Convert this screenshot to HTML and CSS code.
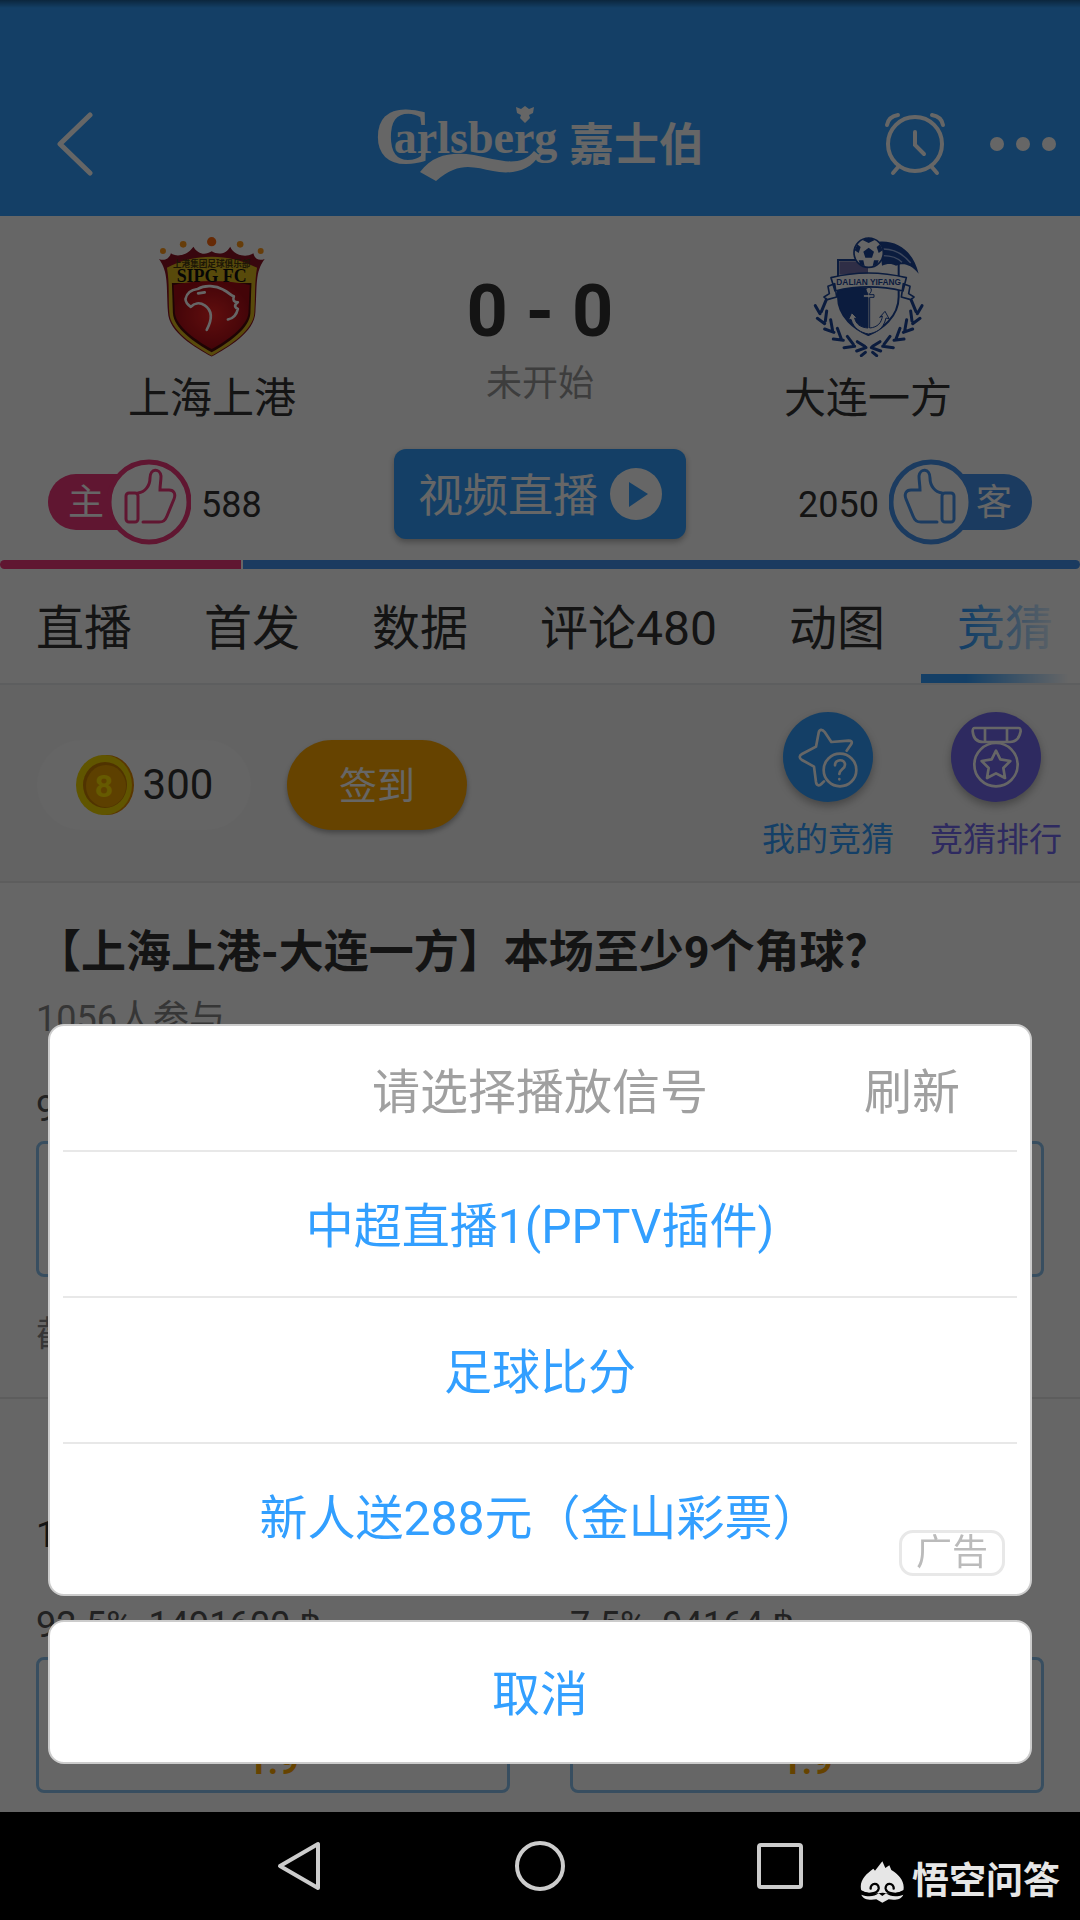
FILE: index.html
```html
<!DOCTYPE html>
<html lang="zh-CN">
<head>
    <meta charset="UTF-8">
    <meta name="viewport" content="width=device-width, initial-scale=1.0">
    <title>上海上港 - 大连一方</title>
    <link rel="stylesheet" href="styles.css">
</head>
<body>
    <div class="page">
        <header class="topbar">
            <button class="icon-btn back" aria-label="返回">
                <svg width="36" height="64" viewBox="0 0 36 64" fill="none" stroke="#fff" stroke-width="5" stroke-linecap="round" stroke-linejoin="round"><path d="M33 3 3 32l30 29"/></svg>
            </button>
            <!-- sponsor logo -->
            <svg class="sponsor" width="328" height="76" viewBox="0 0 328 76" fill="#fff" role="img" aria-label="Carlsberg 嘉士伯">
                <text class="brand" x="-2" y="57" font-size="80">C<tspan dx="-38" dy="-10" font-size="46">arlsberg</tspan></text>
                <path d="M44 66C58 48 76 46 98 49c22 4 46 14 60-4l5 4c-8 16-28 20-46 16-20-4-34-10-57 10z"/>
                <path d="M140 1l5 2 4-3 4 3 5-2-1 6-4 2 1 3-5 5-5-5 1-3-4-2z"/>
                <text class="brand-cn" x="193" y="55" font-size="45">嘉士伯</text>
            </svg>
            <div class="topbar-actions">
                <button class="icon-btn" aria-label="提醒">
                    <svg width="62" height="64" viewBox="0 0 62 64" fill="none" stroke="#fff" stroke-width="4" stroke-linecap="round"><circle cx="31" cy="32" r="27"/><path d="M31 20v13l9 9M3 13C4 7 8 4 14 3M48 3c6 1 10 4 11 10M15 54l-6 7M47 54l6 7"/></svg>
                </button>
                <button class="icon-btn" aria-label="更多">
                    <svg width="68" height="16" viewBox="0 0 68 16" fill="#fff"><circle cx="8" cy="8" r="7"/><circle cx="34" cy="8" r="7"/><circle cx="60" cy="8" r="7"/></svg>
                </button>
            </div>
        </header>

        <main>
            <section class="match">
                <div class="team">
                    <svg width="106" height="121" viewBox="118 45 320 363">
                        <defs><radialGradient id="red"><stop offset="0" stop-color="#f02424"/><stop offset="1" stop-color="#a80c16"/></radialGradient></defs>
                        <path fill="#8c1224" d="M118 113c14 6 30 2 36-17 16 12 48 8 68-20 14 24 36 26 55 14 20 12 44 8 56-14 12 28 50 34 70 20 4 18 18 24 34 17-30 40-22 80-28 160-2 62-84 108-132 135-48-27-130-73-132-135-5-80 2-120-27-160z"/>
                        <path fill="#dcb81c" d="M142 140c80-45 190-45 272 0-8 45-5 90-8 135-2 52-72 100-129 130-57-30-126-78-128-130-3-45 1-90-7-135z"/>
                        <path fill="#4c0a0a" d="M157 186h240l-3 90c-2 46-66 90-117 119-51-29-115-73-117-119z"/>
                        <path fill="url(#red)" d="M162 192c70-16 160-16 230 0l-4 84c-4 42-66 84-111 109-45-25-107-67-111-109z"/>
                        <text class="crest-cn" x="277" y="138" font-size="26">上港集团足球俱乐部</text>
                        <text class="crest-en" x="277" y="182" font-size="54">SIPG FC</text>
                        <path fill="none" stroke="#fff" stroke-width="8" stroke-linecap="round" stroke-linejoin="round" d="M262 327c16-30 18-58-6-74-16-10-32-6-42 5-8-6-16-14-16-24 4-18 18-28 36-30 24-14 56-10 78 2 18 8 22 18 32 20-4 12 0 18 12 18-10 8-12 14 0 20-4 18-12 28-30 32M236 217l20-3"/>
                        <g fill="#ff9a1a"><circle cx="130" cy="89" r="9"/><circle cx="191" cy="69" r="10"/><circle cx="277" cy="61" r="14" fill="#ff6a10"/><circle cx="363" cy="69" r="10"/><circle cx="425" cy="89" r="9"/></g>
                    </svg>
                    <span class="team-name">上海上港</span>
                </div>
                <div class="result">
                    <strong class="score">0 - 0</strong>
                    <span class="status">未开始</span>
                </div>
                <div class="team">
                    <svg width="112" height="121" viewBox="100 45 336 363">
                        <path fill="#fff" stroke="#1c469c" stroke-width="6" d="M178 117h182v110c0 62-52 98-91 115-39-17-91-53-91-115z"/>
                        <path fill="#1c469c" d="M180 200h88v140c-48-20-84-54-88-100z"/>
                        <path fill="#7573ae" d="M182 121h86v40h-86z"/>
                        <path fill="#fff" stroke="#1c469c" stroke-width="3" d="M262 205c4-8 16-8 16 2 0 8-6 10-6 14h14v8h-13v92c24-2 36-16 38-36l-8 4 16-18 12 22-9-2c-8 36-32 44-53 48-22-4-44-16-52-44l-8 2 10-22 18 18-9-2c4 18 16 28 40 30v-92h-14v-8h14c0-6-6-8-6-16z"/>
                        <path fill="#fff" stroke="#1c469c" stroke-width="5" stroke-linejoin="round" d="M148 196l20-8 6 40-28 8-10-8 16-10zM394 196l-20-8-6 40 28 8 10-8-16-10zM157 170c72-18 152-18 226 0l-10 40c-66-16-140-16-204 0z"/>
                        <text class="crest-dl" x="270" y="192" font-size="25">DALIAN YIFANG</text>
                        <path fill="#1c469c" d="M302 62c56-4 102 30 118 96-26-32-50-32-68-24-14-8-28-6-42 0z"/>
                        <path fill="none" stroke="#9cb4e8" stroke-width="4" d="M314 84c34 0 62 18 82 42M314 104c26 0 44 8 56 20"/>
                        <circle cx="270" cy="95" r="44" fill="#fff" stroke="#1c469c" stroke-width="5"/>
                        <path fill="#1c469c" d="M270 80l16 12-6 18h-20l-6-18zM250 56l20-6 20 6-20 10zM228 88l8-18 10 8-6 18zM312 88l-8-18-10 8 6 18zM240 118l14 0 4 18-14-6zM300 118l-14 0-4 18 14-6z"/>
                        <g fill="none" stroke="#1c469c" stroke-width="9" stroke-linecap="round">
                            <path d="M110 254l14 24M142 238l-14 34M116 292l22 16M144 270l-4 30M138 324l28 10M156 296l6 34M164 354l30 4M176 322l12 32M196 380l32-4M206 346l18 24M234 390l28-10M236 362l22 14M248 404l12-10"/>
                            <path d="M430 254l-14 24M398 238l14 34M424 292l-22 16M396 270l4 30M402 324l-28 10M384 296l-6 34M376 354l-30 4M364 322l-12 32M344 380l-32-4M334 346l-18 24M306 390l-28-10M304 362l-22 14M294 404l-12-10"/>
                        </g>
                    </svg>
                    <span class="team-name">大连一方</span>
                </div>

                <button class="vote home">
                    <span class="side">主</span>
                    <svg width="84" height="86" viewBox="-42 -43 84 86" fill="none" stroke="currentColor" stroke-width="3" stroke-linecap="round"><circle r="40" fill="#fff" stroke-width="5"/><rect x="-23" y="-9" width="12" height="29" rx="3"/><path d="M-11-9C-4-10 1-16 1-24c0-10 10-10 11-2 0 5-1 9-1 14h9c5 0 7 4 5 9l-7 17c-2 5-4 6-8 6H-6"/></svg>
                    <span class="votes">588</span>
                </button>
                <button class="watch">
                    <span>视频直播</span>
                    <svg width="52" height="52" viewBox="0 0 52 52"><circle cx="26" cy="26" r="26" fill="#fff"/><path fill="#329fff" d="M19 14v25l19-13z"/></svg>
                </button>
                <button class="vote away">
                    <span class="votes">2050</span>
                    <svg width="84" height="86" viewBox="-42 -43 84 86" fill="none" stroke="currentColor" stroke-width="3" stroke-linecap="round"><g transform="scale(-1 1)"><circle r="40" fill="#fff" stroke-width="5"/><rect x="-23" y="-9" width="12" height="29" rx="3"/><path d="M-11-9C-4-10 1-16 1-24c0-10 10-10 11-2 0 5-1 9-1 14h9c5 0 7 4 5 9l-7 17c-2 5-4 6-8 6H-6"/></g></svg>
                    <span class="side">客</span>
                </button>
            </section>

            <div class="support">
                <div class="support-home" style="width: 22.3%"></div>
                <div class="support-away"></div>
            </div>

            <nav class="tabs">
                <a href="#live">直播</a>
                <a href="#lineup">首发</a>
                <a href="#data">数据</a>
                <a href="#comments">评论480</a>
                <a href="#gif">动图</a>
                <a href="#guess" class="active">竞猜</a>
            </nav>

            <section class="wallet">
                <div class="coins">
                    <svg width="60" height="62" viewBox="0 0 60 62"><ellipse cx="32" cy="31" rx="27" ry="30" fill="#e08a00"/><ellipse cx="29" cy="31" rx="28" ry="30" fill="#f0d400"/><ellipse cx="30" cy="31" rx="22" ry="23" fill="#c88000"/><ellipse cx="31" cy="32" rx="20" ry="21" fill="#e8a000"/><text class="coin-text" x="29" y="43" font-size="32">8</text></svg>
                    <span>300</span>
                </div>
                <button class="sign-in">签到</button>
                <a class="shortcut mine" href="#mine">
                    <svg width="90" height="90" viewBox="249 68 270 270" fill="none" stroke="#fff" stroke-width="8" stroke-linejoin="round" stroke-linecap="round"><path d="M440 184l14-20c4-8-2-10-8-10l-52 4-20-30c-8-10-16-8-18 2l-8 42-42 22c-8 4-10 12 0 18l36 20 6 46c2 12 10 12 16 6l8-8"/><circle cx="420" cy="242" r="49"/><path d="M405 228c0-20 30-20 30-2 0 14-17 14-17 28M418 269v1"/></svg>
                    <span>我的竞猜</span>
                </a>
                <a class="shortcut rank" href="#rank">
                    <svg width="90" height="90" viewBox="753 68 270 270" fill="none" stroke="#fff" stroke-width="8" stroke-linejoin="round"><path d="M824 116h132c6 0 6 4 6 10-4 22-14 32-32 32h-80c-18 0-30-10-32-32 0-6 0-10 6-10zM855 117v40M921 117v40"/><circle cx="888" cy="226" r="65"/><path d="M888 184l13 26 30 5-21 21 5 30-27-14-27 14 5-30-21-21 30-5z"/></svg>
                    <span>竞猜排行</span>
                </a>
            </section>

            <section class="question">
                <h2>【上海上港-大连一方】本场至少9个角球？</h2>
                <p class="joined">1056人参与</p>
                <div class="options">
                    <div class="option">
                        <p class="share"><span>90.8%</span></p>
                        <button><span>是</span><span class="odds">1.9</span></button>
                    </div>
                    <div class="option">
                        <p class="share"><span></span></p>
                        <button><span>否</span><span class="odds">1.9</span></button>
                    </div>
                </div>
                <p class="deadline">截止</p>
            </section>

            <section class="question">
                <h2>【上海上港-大连一方】</h2>
                <p class="joined dark">1人参与</p>
                <div class="options">
                    <div class="option">
                        <p class="share"><span>92.5%</span><span>1491600 ฿</span></p>
                        <button><span>是</span><span class="odds">1.9</span></button>
                    </div>
                    <div class="option">
                        <p class="share"><span>7.5%</span><span>94164 ฿</span></p>
                        <button><span>否</span><span class="odds">1.9</span></button>
                    </div>
                </div>
            </section>
        </main>
    </div>

    <div class="overlay">
        <div class="sheet" role="dialog" aria-labelledby="sheetTitle">
            <div class="sheet-head">
                <h3 id="sheetTitle">请选择播放信号</h3>
                <button class="refresh">刷新</button>
            </div>
            <button class="source">中超直播1(PPTV插件)</button>
            <button class="source">足球比分</button>
            <button class="source">新人送288元（金山彩票）<span class="ad">广告</span></button>
        </div>
        <button class="cancel">取消</button>
    </div>

    <div class="navbar">
        <button class="icon-btn" aria-label="返回"><svg width="48" height="52" viewBox="0 0 48 52" fill="none" stroke="#ccc" stroke-width="4" stroke-linejoin="round"><path d="M42 4v44L4 26z"/></svg></button>
        <button class="icon-btn" aria-label="主页"><svg width="52" height="52" viewBox="0 0 52 52" fill="none" stroke="#ccc" stroke-width="4"><circle cx="26" cy="26" r="23"/></svg></button>
        <button class="icon-btn" aria-label="最近任务"><svg width="48" height="52" viewBox="0 0 48 52" fill="none" stroke="#ccc" stroke-width="4"><rect x="3" y="5" width="42" height="42" rx="2"/></svg></button>
        <div class="watermark">
            <svg width="44" height="42" viewBox="178 232 132 124"><path fill="#e6e6e6" d="M182 320c-8-30 14-50 36-66l5 6 22-28 9 20 12-8 6 14c22 14 42 34 36 62-20 10-44 8-62 6-20 2-44 4-64-6z"/><path fill="none" stroke="#000" stroke-width="7" stroke-linecap="round" d="M180 322c22 14 52 6 54-8 2-20-26-18-24 0M309 322c-22 14-52 6-54-8-2-20 26-18 24 0"/><path fill="#e6e6e6" d="M182 332c20 8 40 6 52-4l11 8 11-8c12 10 32 12 52 4-6 14-24 18-44 14l-19 10-18-10c-20 4-40 0-45-14z"/></svg>
            <span>悟空问答</span>
        </div>
    </div>
</body>
</html>
```
FILE: styles.css
```css
* {
    box-sizing: border-box;
}

body {
    margin: 0;
    font-family: Roboto, "Noto Sans CJK SC", sans-serif;
    font-size: 36px;
    line-height: 44px;
    color: #333;
    background: #000;
}

h2, h3, p {
    margin: 0;
}

button {
    font: inherit;
    color: inherit;
    background: none;
    border: none;
    padding: 0;
    cursor: pointer;
}

a {
    color: inherit;
    text-decoration: none;
}

svg {
    display: block;
    flex-shrink: 0;
}

.page {
    height: calc(100vh - 108px);
    overflow: hidden;
    background: #fff;
}

/* top bar */
.topbar {
    display: grid;
    grid-template-columns: 1fr auto 1fr;
    align-items: center;
    height: 216px;
    padding: 72px 23px 0 57px;
    background: linear-gradient(rgba(0, 0, 0, 0.4), rgba(0, 0, 0, 0) 8px) #329fff;
}

.topbar .back {
    justify-self: start;
}

.sponsor {
    margin-right: 35px;
    overflow: visible;
}

.brand {
    font-family: "Liberation Serif", serif;
    font-weight: bold;
}

.brand-cn {
    font-family: "Noto Sans CJK SC", sans-serif;
    font-weight: bold;
}

.topbar-actions {
    display: flex;
    align-items: center;
    justify-content: flex-end;
    gap: 43px;
}

/* match */
.match {
    display: grid;
    grid-template-columns: repeat(3, 1fr);
    align-items: start;
    row-gap: 26px;
    padding: 20px 48px 15px;
}

.team {
    display: flex;
    flex-direction: column;
    align-items: center;
    gap: 18px;
}

.team-name {
    font-size: 42px;
    line-height: 48px;
}

.crest-cn {
    font-family: "Noto Sans CJK SC", sans-serif;
    font-weight: bold;
    text-anchor: middle;
    fill: #4a3a10;
}

.crest-en {
    font-family: "Liberation Serif", serif;
    font-weight: bold;
    text-anchor: middle;
    fill: #111;
}

.crest-dl {
    font-family: "Liberation Sans", sans-serif;
    font-weight: bold;
    text-anchor: middle;
    fill: #1c469c;
}

.result {
    display: flex;
    flex-direction: column;
    align-items: center;
    gap: 14px;
    padding-top: 40px;
}

.score {
    font-size: 72px;
    line-height: 72px;
}

.status {
    color: #999;
}

.vote {
    display: flex;
    align-items: center;
    padding-top: 10px;
}

.vote.home {
    justify-self: start;
    color: #f0377a;
}

.vote.away {
    justify-self: end;
    color: #4594f0;
}

.vote svg {
    z-index: 1;
}

.side {
    width: 102px;
    height: 56px;
    padding: 2px 20px 0;
    line-height: 54px;
    color: #fff;
    border-radius: 28px;
}

.home .side {
    margin-right: -43px;
    text-align: left;
    background: #f0377a;
}

.away .side {
    margin-left: -43px;
    text-align: right;
    background: #4594f0;
}

.votes {
    margin: 0 10px;
    padding-top: 6px;
    color: #333;
}

.watch {
    display: flex;
    align-items: center;
    justify-self: center;
    gap: 12px;
    height: 90px;
    padding: 0 24px;
    font-size: 45px;
    color: #fff;
    background: #329fff;
    border-radius: 12px;
    box-shadow: 0 3px 6px rgba(0, 0, 0, 0.3);
}

.watch span {
    padding-top: 6px;
}

.support {
    display: flex;
    gap: 2px;
    height: 9px;
}

.support-home {
    background: #f0377a;
    border-radius: 5px 0 0 5px;
}

.support-away {
    flex: 1;
    background: #4594f0;
    border-radius: 0 5px 5px 0;
}

/* tabs */
.tabs {
    position: relative;
    display: flex;
    overflow: hidden;
    border-bottom: 2px solid #e8ebee;
}

.tabs a {
    flex-shrink: 0;
    height: 114px;
    padding: 0 36px;
    font-size: 48px;
    line-height: 120px;
}

.tabs .active {
    color: #329fff;
    border-bottom: 9px solid #329fff;
}

/* fade out the tabs that run off the right edge */
.tabs::after {
    content: "";
    position: absolute;
    top: 0;
    right: 0;
    bottom: 0;
    width: 114px;
    background: linear-gradient(to right, rgba(255, 255, 255, 0), #fff 90%);
}

/* coins and shortcuts */
.wallet {
    display: flex;
    align-items: center;
    gap: 36px;
    height: 198px;
    padding: 4px 18px 0 37px;
    background: #f7f7f7;
    border-bottom: 2px solid #e8e8e8;
}

.coins {
    display: flex;
    align-items: center;
    justify-content: center;
    gap: 8px;
    width: 214px;
    height: 90px;
    font-size: 42px;
    background: #fcfcfc;
    border-radius: 45px;
}

.coin-text {
    font-weight: bold;
    text-anchor: middle;
    fill: #ffe000;
}

.sign-in {
    width: 180px;
    height: 90px;
    margin-right: auto;
    padding-top: 2px;
    font-size: 38px;
    color: #fff;
    background: #ffa800;
    border-radius: 45px;
    box-shadow: 0 3px 5px rgba(0, 0, 0, 0.3);
}

.shortcut {
    display: flex;
    flex-direction: column;
    align-items: center;
    gap: 20px;
    font-size: 33px;
    line-height: 36px;
}

.shortcut svg {
    border-radius: 50%;
    box-shadow: 0 4px 8px rgba(0, 0, 0, 0.3);
}

.mine {
    color: #329fff;
}

.mine svg {
    background: #329fff;
}

.rank {
    color: #7369f0;
}

.rank svg {
    background: #7369f0;
}

/* questions */
.question {
    padding: 42px 36px 40px;
    border-bottom: 2px solid #e8e8e8;
}

.question h2 {
    font-size: 45px;
    line-height: 56px;
    white-space: nowrap;
}

.joined {
    margin-top: 16px;
    color: #888;
}

.joined.dark {
    color: #333;
}

.options {
    display: grid;
    grid-template-columns: 1fr 1fr;
    gap: 60px;
    margin-top: 46px;
}

.share {
    display: flex;
    gap: 16px;
    height: 44px;
    margin-bottom: 10px;
    color: #555;
}

.option button {
    display: flex;
    flex-direction: column;
    align-items: center;
    justify-content: center;
    gap: 30px;
    width: 100%;
    height: 136px;
    border: 3px solid #8cc4f0;
    border-radius: 8px;
}

.odds {
    font-weight: bold;
    color: #ffa800;
}

.deadline {
    margin-top: 36px;
    color: #888;
}

/* bottom sheet */
.overlay {
    position: fixed;
    inset: 0 0 108px;
    z-index: 2;
    display: flex;
    flex-direction: column;
    justify-content: flex-end;
    gap: 24px;
    padding: 48px;
    background: rgba(0, 0, 0, 0.6);
}

.sheet, .cancel {
    background: #fff;
    border: 2px solid #ccc;
    border-radius: 16px;
}

.sheet {
    padding: 0 13px 6px;
    font-size: 48px;
}

.sheet-head {
    position: relative;
    display: flex;
    align-items: center;
    justify-content: center;
    height: 124px;
    padding-top: 10px;
    color: #a0a0a0;
}

.sheet-head h3 {
    font-size: 48px;
    font-weight: normal;
}

.refresh {
    position: absolute;
    right: 57px;
}

.source {
    position: relative;
    display: block;
    width: 100%;
    height: 146px;
    padding-top: 6px;
    color: #329fff;
    border-top: 2px solid #e8e8e8;
}

.ad {
    position: absolute;
    right: 12px;
    bottom: 12px;
    padding: 0 14px;
    font-size: 36px;
    line-height: 40px;
    color: #bbb;
    border: 3px solid #e8e8e8;
    border-radius: 14px;
}

.cancel {
    height: 144px;
    padding-top: 6px;
    font-size: 48px;
    color: #329fff;
}

/* system navigation */
.navbar {
    position: relative;
    display: flex;
    align-items: center;
    justify-content: center;
    gap: 190px;
    height: 108px;
    background: #000;
}

.watermark {
    position: absolute;
    right: 20px;
    bottom: 16px;
    display: flex;
    align-items: center;
    gap: 8px;
    font-size: 37px;
    font-weight: bold;
    color: #e6e6e6;
}
```
